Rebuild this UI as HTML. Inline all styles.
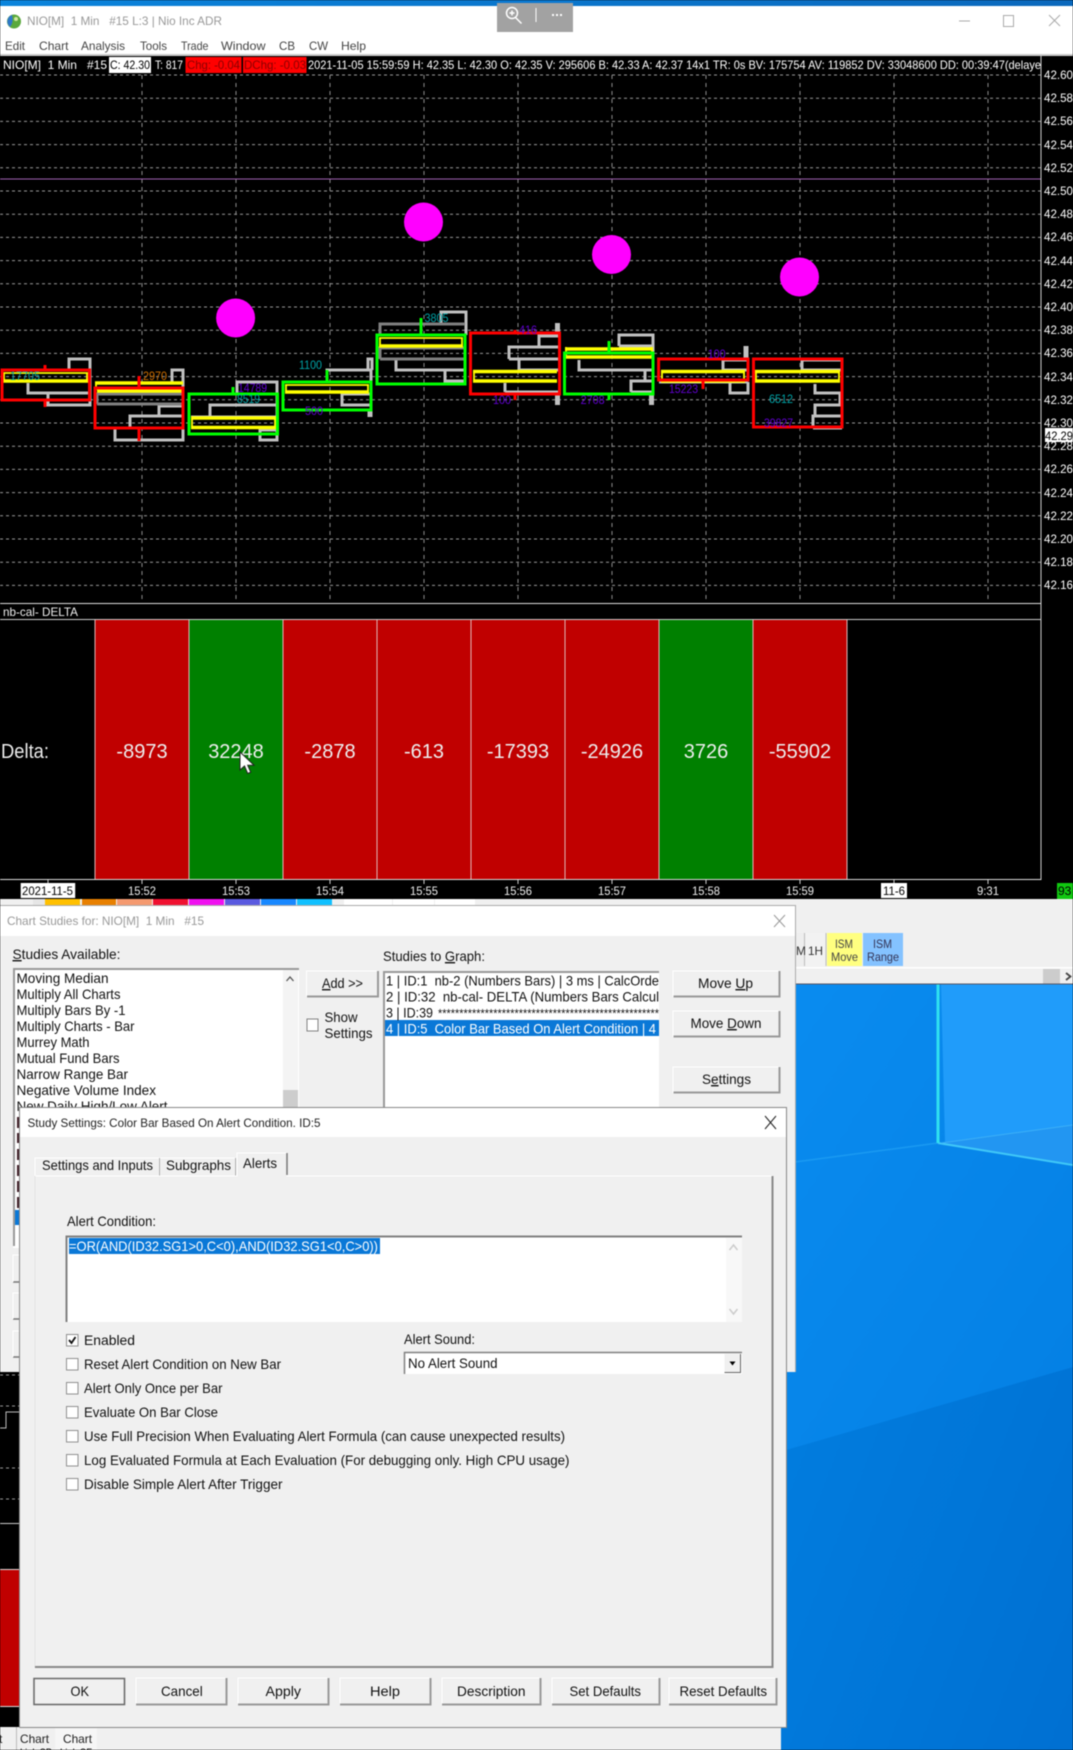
<!DOCTYPE html>
<html><head><meta charset="utf-8"><title>NIO[M] 1 Min</title>
<style>
html,body{margin:0;padding:0;background:#000;width:1073px;height:1750px;overflow:hidden}
svg{display:block;position:absolute;left:0;top:0;filter:blur(.4px)}
text{font-family:"Liberation Sans",sans-serif;font-size:14px;fill:#111;white-space:pre}
.c text,text.c{font-size:12px}
.w text{fill:#fff;font-size:12px}
.p text{fill:#fff;font-size:12px}
.tm text{fill:#eee;font-size:12px;text-anchor:middle}
.d text{fill:#eee;font-size:20px;text-anchor:middle}
.m text{fill:#444;font-size:12px}
.cy text,.pu text{font-size:12px}
.cy text{fill:#00a4a8}
.pu text{fill:#6000d0}
</style></head><body>
<svg xmlns="http://www.w3.org/2000/svg" width="1073" height="1750" viewBox="0 0 1073 1750">
<defs>
<linearGradient id="top" x1="0" x2="1" y1="0" y2="0"><stop offset="0" stop-color="#0a84dc"/><stop offset="1" stop-color="#0a68bc"/></linearGradient>
<linearGradient id="wl" x1="0" x2="1" y1="0" y2="1"><stop offset="0" stop-color="#0282e4"/><stop offset="1" stop-color="#0070d2"/></linearGradient>
<linearGradient id="wm" x1="0" x2="1" y1="0" y2="1"><stop offset="0" stop-color="#0a8cf0"/><stop offset="1" stop-color="#0480e4"/></linearGradient>
<clipPath id="hc"><rect x="0" y="55" width="1041" height="20"/></clipPath>
<clipPath id="pc"><rect x="1042" y="55" width="31" height="550"/></clipPath>
</defs>

<!-- window chrome -->
<rect x="0" y="0" width="1073" height="56" fill="#fff"/>
<rect x="0" y="0" width="1073" height="6" fill="url(#top)"/>
<circle cx="14" cy="21.500" r="7" fill="#5aa83c"/>
<path d="M14 14.500a7 7 0 0 0-4 12.500q4-5 2-12z" fill="#2f78c8"/>
<circle cx="16" cy="19" r="2" fill="#cfe8a0"/>
<text class="c" x="27" y="25" style="fill:#999" textLength="195" lengthAdjust="spacingAndGlyphs">NIO[M]  1 Min   #15 L:3 | Nio Inc ADR</text>
<rect x="497" y="0" width="76" height="32" fill="#a2a2a2"/>
<rect x="497" y="0" width="76" height="3" fill="#0a78d0"/>
<circle cx="512" cy="13" r="5.500" fill="none" stroke="#fff" stroke-width="1.500"/>
<path d="M509.500 13h5M512 10.500v5M515.500 17.500l6 6" stroke="#fff" stroke-width="1.500" fill="none"/>
<path d="M536 8v14" stroke="#fff"/>
<path d="M552 15h2M556 15h2M560 15h2" stroke="#fff" stroke-width="2"/>
<path d="M959 21h11" stroke="#aaa"/>
<rect x="1003.500" y="15.500" width="10" height="11" fill="none" stroke="#aaa"/>
<path d="M1049 15l11 11M1060 15l-11 11" stroke="#aaa" fill="none"/>
<g class="m">
<text x="5" y="50" textLength="20" lengthAdjust="spacingAndGlyphs">Edit</text>
<text x="39" y="50" textLength="29.500" lengthAdjust="spacingAndGlyphs">Chart</text>
<text x="81" y="50" textLength="44" lengthAdjust="spacingAndGlyphs">Analysis</text>
<text x="140" y="50" textLength="27" lengthAdjust="spacingAndGlyphs">Tools</text>
<text x="181" y="50" textLength="27.500" lengthAdjust="spacingAndGlyphs">Trade</text>
<text x="221" y="50" textLength="44.500" lengthAdjust="spacingAndGlyphs">Window</text>
<text x="279" y="50" textLength="16" lengthAdjust="spacingAndGlyphs">CB</text>
<text x="309" y="50" textLength="19" lengthAdjust="spacingAndGlyphs">CW</text>
<text x="341" y="50" textLength="25" lengthAdjust="spacingAndGlyphs">Help</text>
</g>
<rect x="0" y="54" width="1073" height="2" fill="#ccc"/>

<!-- chart -->
<rect x="0" y="56" width="1073" height="843" fill="#000"/>
<g clip-path="url(#hc)" class="w">
<text x="3" y="69" textLength="104" lengthAdjust="spacingAndGlyphs">NIO[M]  1 Min   #15</text>
<rect x="109" y="57" width="42" height="16" fill="#fff"/>
<text x="110" y="69" textLength="40" lengthAdjust="spacingAndGlyphs" style="fill:#000">C: 42.30</text>
<text x="155" y="69" textLength="28" lengthAdjust="spacingAndGlyphs">T: 817</text>
<rect x="185.500" y="57" width="56" height="16" fill="#f00"/>
<text x="187" y="69" textLength="53" lengthAdjust="spacingAndGlyphs" style="fill:#8a0000">Chg: -0.04</text>
<rect x="243" y="57" width="63.500" height="16" fill="#f00"/>
<text x="244" y="69" textLength="62" lengthAdjust="spacingAndGlyphs" style="fill:#8a0000">DChg: -0.03</text>
<text x="308" y="69" textLength="733" lengthAdjust="spacingAndGlyphs">2021-11-05 15:59:59 H: 42.35 L: 42.30 O: 42.35 V: 295606 B: 42.33 A: 42.37 14x1 TR: 0s BV: 175754 AV: 119852 DV: 33048600 DD: 00:39:47(delaye</text>
</g>
<path d="M0 75H1041M0 98.200H1041M0 121.400H1041M0 144.600H1041M0 167.800H1041M0 191H1041M0 214.200H1041M0 237.400H1041M0 260.600H1041M0 283.800H1041M0 307H1041M0 330.200H1041M0 353.400H1041M0 376.600H1041M0 399.800H1041M0 423H1041M0 446.200H1041M0 469.400H1041M0 492.600H1041M0 515.800H1041M0 539H1041M0 562.200H1041M0 585.400H1041" stroke="#999" stroke-dasharray="3 3" fill="none"/>
<path d="M142 75V603M236 75V603M330 75V603M424 75V603M518 75V603M612 75V603M706 75V603M800 75V603M894 75V603M988 75V603" stroke="#8c8c8c" stroke-dasharray="4 4" fill="none"/>
<path d="M0 179H1041" stroke="#a060b0" fill="none"/>
<path d="M1041 56V880" stroke="#ccc" fill="none"/>
<g class="p" clip-path="url(#pc)">
<text x="1044" y="79" textLength="29" lengthAdjust="spacingAndGlyphs">42.60</text>
<text x="1044" y="102" textLength="29" lengthAdjust="spacingAndGlyphs">42.58</text>
<text x="1044" y="125" textLength="29" lengthAdjust="spacingAndGlyphs">42.56</text>
<text x="1044" y="149" textLength="29" lengthAdjust="spacingAndGlyphs">42.54</text>
<text x="1044" y="172" textLength="29" lengthAdjust="spacingAndGlyphs">42.52</text>
<text x="1044" y="195" textLength="29" lengthAdjust="spacingAndGlyphs">42.50</text>
<text x="1044" y="218" textLength="29" lengthAdjust="spacingAndGlyphs">42.48</text>
<text x="1044" y="241" textLength="29" lengthAdjust="spacingAndGlyphs">42.46</text>
<text x="1044" y="265" textLength="29" lengthAdjust="spacingAndGlyphs">42.44</text>
<text x="1044" y="288" textLength="29" lengthAdjust="spacingAndGlyphs">42.42</text>
<text x="1044" y="311" textLength="29" lengthAdjust="spacingAndGlyphs">42.40</text>
<text x="1044" y="334" textLength="29" lengthAdjust="spacingAndGlyphs">42.38</text>
<text x="1044" y="357" textLength="29" lengthAdjust="spacingAndGlyphs">42.36</text>
<text x="1044" y="381" textLength="29" lengthAdjust="spacingAndGlyphs">42.34</text>
<text x="1044" y="404" textLength="29" lengthAdjust="spacingAndGlyphs">42.32</text>
<text x="1044" y="427" textLength="29" lengthAdjust="spacingAndGlyphs">42.30</text>
<text x="1044" y="450" textLength="29" lengthAdjust="spacingAndGlyphs">42.28</text>
<rect x="1045" y="428" width="28" height="14" fill="#fff"/>
<text x="1045" y="440" textLength="28" lengthAdjust="spacingAndGlyphs" style="fill:#000">42.29</text>
<text x="1044" y="473" textLength="29" lengthAdjust="spacingAndGlyphs">42.26</text>
<text x="1044" y="497" textLength="29" lengthAdjust="spacingAndGlyphs">42.24</text>
<text x="1044" y="520" textLength="29" lengthAdjust="spacingAndGlyphs">42.22</text>
<text x="1044" y="543" textLength="29" lengthAdjust="spacingAndGlyphs">42.20</text>
<text x="1044" y="566" textLength="29" lengthAdjust="spacingAndGlyphs">42.18</text>
<text x="1044" y="589" textLength="29" lengthAdjust="spacingAndGlyphs">42.16</text>
</g>

<!-- circles -->
<circle cx="423.500" cy="222" r="19.500" fill="#f0f"/>
<circle cx="611.500" cy="254.500" r="19.500" fill="#f0f"/>
<circle cx="799.500" cy="277" r="19.500" fill="#f0f"/>
<circle cx="235.600" cy="318" r="19.500" fill="#f0f"/>

<!-- gray bars -->
<g fill="none" stroke="#c0c0c0" stroke-width="3">
<path d="M69 370V359H90V405H48V393H28V383"/>
<path d="M28 393H90"/>
<path d="M172 382V370H183V382M183 382V440H115V427M130 427V416H183M159 416V406H183"/>
<path d="M237 393V382H277V440H260V430H277M210 417V405H277M191 417H277"/>
<path d="M327 382V370H371V405H342V394H371M368 370V359H372V370"/>
<path d="M441 324V312H466V335M396 360V370H465M445 370V381H465"/>
<path d="M539 346V336H559M509 359V347H559M509 359H559M519 370V360M519 370H559M505 392V383M505 392H559"/>
<path d="M619 346V335H653V394M619 346H653M579 360V370H653M645 370V381M631 392V381H653M631 392H653"/>
<path d="M723 370V360H748M723 370H748M730 382V393H748V382M659 382H748"/>
<path d="M802 370V360H842M802 370H842M815 384V393H840V405H815V416M813 428V416H842M813 428H842"/>
</g>
<g fill="none" stroke="#c0c0c0" stroke-width="5">
<path d="M370 410V417M557.500 323V333M557.500 394V405M651.500 394V405M746 346V359"/>
</g>
<g fill="none" stroke="#808080" stroke-width="3">
<path d="M97 404V394H183M97 404H183M380 335V324H465M380 359V348H465M380 359H465"/>
</g>

<!-- yellow -->
<g fill="none" stroke="#ff0" stroke-width="3.500">
<path d="M3 381H88M95 383H183M97 391H183M191 418H276M191 427.500H276M285 392H369M379 346H463M473 371.500H557M473 381H557M565 349H653M565 357H653M661 371.500H745M661 381H745M755 371.500H840M755 381H840"/>
</g>
<g fill="none" stroke="#ff0" stroke-width="1.800">
<path d="M3 373H88M4 373V381M87 373V381M96 383V390M192 418V428M275 418V428M285 385H369M286 385V392M368 385V392M379 338H463M380 338V346M462 338V346M474 371.500V381M566 347V357M652 347V357M662 371.500V381M744 371.500V381M756 371.500V381M839 371.500V381"/>
</g>

<!-- bodies -->
<g fill="none" stroke="#f00" stroke-width="3">
<rect x="2" y="370" width="87.500" height="30"/>
<path d="M45 365V370M45 400V407"/>
<rect x="95" y="388" width="88" height="40"/>
<path d="M139 376V388M139 428V441"/>
<rect x="470.500" y="333" width="89" height="61"/>
<path d="M515 330V333M515 394V400"/>
<rect x="658.600" y="359" width="89.400" height="21"/>
<path d="M703 380V389"/>
<rect x="753.500" y="359" width="88.500" height="68"/>
</g>
<g fill="none" stroke="#0f0" stroke-width="3">
<rect x="189" y="394" width="88.500" height="40"/>
<path d="M233 387V394"/>
<rect x="283" y="382" width="88" height="28"/>
<path d="M327 370V382"/>
<rect x="377" y="335" width="88" height="49"/>
<path d="M421 318V335"/>
<rect x="564.500" y="353" width="88.500" height="41"/>
<path d="M609 341V353M609 394V400"/>
</g>

<!-- value labels -->
<g class="cy">
<text x="10" y="380" textLength="30" lengthAdjust="spacingAndGlyphs">17705</text>
<text x="237" y="403" textLength="23" lengthAdjust="spacingAndGlyphs">8519</text>
<text x="299" y="369" textLength="23" lengthAdjust="spacingAndGlyphs">1100</text>
<text x="424.500" y="322" textLength="24" lengthAdjust="spacingAndGlyphs">3805</text>
<text x="769" y="403" textLength="24" lengthAdjust="spacingAndGlyphs">6512</text>
</g>
<text class="c" x="143" y="380" textLength="24" lengthAdjust="spacingAndGlyphs" style="fill:#d07000">2970</text>
<g class="pu">
<text x="238" y="392" textLength="29" lengthAdjust="spacingAndGlyphs">14789</text>
<text x="305" y="415" textLength="18" lengthAdjust="spacingAndGlyphs">500</text>
<text x="519" y="334" textLength="18" lengthAdjust="spacingAndGlyphs">416</text>
<text x="493" y="404" textLength="18" lengthAdjust="spacingAndGlyphs">100</text>
<text x="580.600" y="404" textLength="24" lengthAdjust="spacingAndGlyphs">2708</text>
<text x="707.700" y="358" textLength="18" lengthAdjust="spacingAndGlyphs">100</text>
<text x="669" y="393" textLength="29" lengthAdjust="spacingAndGlyphs">15223</text>
<text x="764" y="427" textLength="29" lengthAdjust="spacingAndGlyphs">39827</text>
</g>

<!-- delta panel -->
<rect x="0" y="603" width="1041" height="1" fill="#ddd"/>
<text x="3" y="616" textLength="75" lengthAdjust="spacingAndGlyphs" style="font-size:12px;fill:#eee">nb-cal- DELTA</text>
<rect x="0" y="619" width="1041" height="1" fill="#ccc"/>
<rect x="95" y="620" width="94" height="259" fill="#c00000"/>
<rect x="189" y="620" width="94" height="259" fill="#008000"/>
<rect x="283" y="620" width="94" height="259" fill="#c00000"/>
<rect x="377" y="620" width="94" height="259" fill="#c00000"/>
<rect x="471" y="620" width="94" height="259" fill="#c00000"/>
<rect x="565" y="620" width="94" height="259" fill="#c00000"/>
<rect x="659" y="620" width="94" height="259" fill="#008000"/>
<rect x="753" y="620" width="94" height="259" fill="#c00000"/>
<path d="M95 620V879M189 620V879M283 620V879M377 620V879M471 620V879M565 620V879M659 620V879M753 620V879M847 620V879" stroke="#ddb8b8" fill="none"/>
<text x="1" y="758" style="font-size:20px;fill:#eee" textLength="48" lengthAdjust="spacingAndGlyphs">Delta:</text>
<g class="d">
<text x="142" y="758">-8973</text>
<text x="236" y="758">32248</text>
<text x="330" y="758">-2878</text>
<text x="424" y="758">-613</text>
<text x="518" y="758">-17393</text>
<text x="612" y="758">-24926</text>
<text x="706" y="758">3726</text>
<text x="800" y="758">-55902</text>
</g>
<path d="M240 752V770l4.500-4 3.200 7.500 3-1.300-3-7h6.300Z" fill="#fff" stroke="#222" stroke-width="1"/>

<!-- time axis -->
<rect x="0" y="879" width="1041" height="1" fill="#ddd"/>
<path d="M48 880v4M142 880v4M236 880v4M330 880v4M424 880v4M518 880v4M612 880v4M706 880v4M800 880v4M894 880v4M988 880v4" stroke="#ccc" fill="none"/>
<rect x="20.700" y="883" width="54.500" height="15" fill="#fff"/>
<text x="22" y="895" textLength="51" lengthAdjust="spacingAndGlyphs" style="font-size:12px;fill:#000">2021-11-5</text>
<g class="tm">
<text x="142" y="895" textLength="28" lengthAdjust="spacingAndGlyphs">15:52</text>
<text x="236" y="895" textLength="28" lengthAdjust="spacingAndGlyphs">15:53</text>
<text x="330" y="895" textLength="28" lengthAdjust="spacingAndGlyphs">15:54</text>
<text x="424" y="895" textLength="28" lengthAdjust="spacingAndGlyphs">15:55</text>
<text x="518" y="895" textLength="28" lengthAdjust="spacingAndGlyphs">15:56</text>
<text x="612" y="895" textLength="28" lengthAdjust="spacingAndGlyphs">15:57</text>
<text x="706" y="895" textLength="28" lengthAdjust="spacingAndGlyphs">15:58</text>
<text x="800" y="895" textLength="28" lengthAdjust="spacingAndGlyphs">15:59</text>
<text x="988" y="895" textLength="22" lengthAdjust="spacingAndGlyphs">9:31</text>
</g>
<rect x="881" y="883" width="26" height="15" fill="#fff"/>
<text x="883" y="895" textLength="22" lengthAdjust="spacingAndGlyphs" style="font-size:12px;fill:#000">11-6</text>
<rect x="1057" y="883" width="16" height="16" fill="#10c810"/>
<text x="1058" y="895" style="font-size:12px;fill:#000">93</text>

<!-- toolbar behind -->
<rect x="0" y="899" width="1073" height="85" fill="#f0f0f0"/>
<rect x="33" y="899" width="12" height="7" fill="#e6e6e6"/>
<rect x="45" y="899" width="35" height="7" fill="#ffc000"/>
<rect x="82" y="899" width="34" height="7" fill="#e88000"/>
<rect x="117" y="899" width="35" height="7" fill="#f59a70"/>
<rect x="153" y="899" width="35" height="7" fill="#f01030"/>
<rect x="189" y="899" width="35" height="7" fill="#f010f0"/>
<rect x="225" y="899" width="35" height="7" fill="#5a5ae0"/>
<rect x="261" y="899" width="35" height="7" fill="#1888ff"/>
<rect x="297" y="899" width="35" height="7" fill="#10c0ff"/>
<rect x="344" y="899" width="48" height="6" fill="#fff"/>
<rect x="393" y="899" width="41" height="6" fill="#fff"/>
<rect x="435" y="899" width="40" height="6" fill="#fff"/>

<!-- wallpaper -->
<rect x="781" y="984" width="292" height="766" fill="url(#wl)"/>
<polygon points="781,984 1073,984 1073,1367 786,1450 781,1452" fill="url(#wm)"/>
<polygon points="941,984 1073,984 1073,1125 945,1142" fill="#209cfa"/>
<polygon points="941,1143 1073,1125 1073,1164" fill="#2296f2"/>
<path d="M938 1143L1073 1165" stroke="#40c8f8" stroke-width="2" fill="none"/>
<path d="M938 1143L795 1162" stroke="#1a9af2" stroke-width="1.500" fill="none"/>
<path d="M941 1143L1073 1125" stroke="#3cb0f8" stroke-width="1" fill="none"/>
<path d="M938 984V1143" stroke="#30e0f0" stroke-width="3" fill="none"/>

<!-- toolbar right -->
<rect x="795" y="933" width="9" height="33" fill="#eee"/>
<rect x="805" y="933" width="21" height="33" fill="#f2f2f2"/>
<path d="M804.500 933v33M826 933v33" stroke="#bbb" fill="none"/>
<rect x="827" y="933" width="35" height="33" fill="#ffff80"/>
<rect x="863" y="933" width="40" height="33" fill="#84c2ff"/>
<text x="796" y="955" style="font-size:12px;fill:#333">M</text>
<text x="808" y="955" textLength="15" lengthAdjust="spacingAndGlyphs" style="font-size:12px;fill:#333">1H</text>
<text x="835" y="948" textLength="18" lengthAdjust="spacingAndGlyphs" style="font-size:12px;fill:#444">ISM</text>
<text x="831" y="961" textLength="27" lengthAdjust="spacingAndGlyphs" style="font-size:12px;fill:#444">Move</text>
<text x="873" y="948" textLength="19" lengthAdjust="spacingAndGlyphs" style="font-size:12px;fill:#335">ISM</text>
<text x="867" y="961" textLength="32" lengthAdjust="spacingAndGlyphs" style="font-size:12px;fill:#335">Range</text>
<rect x="795" y="967" width="278" height="1.500" fill="#fff"/>
<rect x="1043" y="969" width="17" height="15" fill="#ccc"/>
<path d="M1066 973l4.500 3.500-4.500 3.500" fill="none" stroke="#444" stroke-width="1.800"/>
<rect x="795" y="983.500" width="278" height="1" fill="#556"/>

<!-- lower left under windows -->
<rect x="0" y="1372" width="20" height="355" fill="#000"/>
<path d="M0 1375H20M0 1406H20M0 1468H20M0 1499H20" stroke="#999" stroke-dasharray="3 3" fill="none"/>
<path d="M0 1428H6V1412H20" stroke="#bbb" fill="none"/>
<rect x="0" y="1523" width="20" height="1" fill="#ccc"/>
<rect x="0" y="1569" width="20" height="1" fill="#ddd"/>
<rect x="0" y="1570" width="20" height="136" fill="#c00000"/>
<rect x="0" y="1706" width="20" height="1" fill="#ddd"/>
<rect x="0" y="1727" width="781" height="23" fill="#f0f0f0"/>
<rect x="16" y="1727" width="1" height="23" fill="#bbb"/>
<rect x="55" y="1727" width="42" height="23" fill="#f6f6f6"/>
<text x="-1" y="1743" style="font-size:12px;fill:#222">t</text>
<text x="20" y="1743" textLength="29" lengthAdjust="spacingAndGlyphs" style="font-size:12px;fill:#222">Chart</text>
<text x="63" y="1743" textLength="29" lengthAdjust="spacingAndGlyphs" style="font-size:12px;fill:#222">Chart</text>
<text x="20" y="1757" textLength="32" lengthAdjust="spacingAndGlyphs" style="font-size:12px;fill:#222">Link SP</text>
<text x="60" y="1757" textLength="32" lengthAdjust="spacingAndGlyphs" style="font-size:12px;fill:#222">Link SF</text>

<!-- Chart Studies dialog -->
<rect x="0" y="905" width="795" height="467" fill="#f0f0f0"/>
<rect x="0" y="906" width="795" height="30" fill="#fff"/>
<path d="M0 905.500H795.500V1372" stroke="#aaa" fill="none"/>
<text x="7" y="925" textLength="197" lengthAdjust="spacingAndGlyphs" style="font-size:12px;fill:#999">Chart Studies for: NIO[M]  1 Min   #15</text>
<path d="M774 915l11 12M785 915l-11 12" stroke="#999" fill="none"/>
<text x="12.500" y="959" textLength="108" lengthAdjust="spacingAndGlyphs"><tspan style="text-decoration:underline">S</tspan>tudies Available:</text>
<rect x="13" y="968" width="286" height="280" fill="#fff"/>
<path d="M14 1246V969H299" stroke="#999" stroke-width="2" fill="none"/>
<rect x="283" y="970" width="15" height="137" fill="#f4f4f4"/>
<rect x="283" y="1090" width="15" height="20" fill="#cdcdcd"/>
<path d="M286.500 981l3.500-4 3.500 4" fill="none" stroke="#555" stroke-width="1.300"/>
<g>
<text x="16.500" y="983" textLength="92" lengthAdjust="spacingAndGlyphs">Moving Median</text>
<text x="16.500" y="999" textLength="104" lengthAdjust="spacingAndGlyphs">Multiply All Charts</text>
<text x="16.500" y="1015" textLength="109" lengthAdjust="spacingAndGlyphs">Multiply Bars By -1</text>
<text x="16.500" y="1031" textLength="118" lengthAdjust="spacingAndGlyphs">Multiply Charts - Bar</text>
<text x="16.500" y="1047" textLength="73" lengthAdjust="spacingAndGlyphs">Murrey Math</text>
<text x="16.500" y="1063" textLength="103" lengthAdjust="spacingAndGlyphs">Mutual Fund Bars</text>
<text x="16.500" y="1079" textLength="111.500" lengthAdjust="spacingAndGlyphs">Narrow Range Bar</text>
<text x="16.500" y="1095" textLength="139.500" lengthAdjust="spacingAndGlyphs">Negative Volume Index</text>
<text x="16.500" y="1111" textLength="151" lengthAdjust="spacingAndGlyphs">New Daily High/Low Alert</text>
</g>
<path d="M17 1117h2v11h-2zM17 1133h2v10h-2zM17 1149h2v11h-2zM17 1165h2v11h-2zM17 1181h2v11h-2zM17 1197h2v11h-2z" fill="#402028"/>
<rect x="15" y="1210" width="4" height="15" fill="#0a78d7"/>
<rect x="13" y="1248" width="7" height="124" fill="#f0f0f0"/>
<path d="M13 1282h6M13 1319h6M13 1357h6" stroke="#777" stroke-width="1.500" fill="none"/>
<path d="M13 1282V1255H19M13 1319V1293H19M13 1357V1331H19" stroke="#fff" fill="none"/>

<!-- Add / show -->
<rect x="306.500" y="971" width="72" height="26" fill="#f0f0f0"/>
<path d="M306.500 997V971H378.500" stroke="#fff" fill="none"/>
<path d="M307 996.500H378V971" stroke="#999" stroke-width="2" fill="none"/>
<text x="322" y="988" textLength="41" lengthAdjust="spacingAndGlyphs"><tspan style="text-decoration:underline">A</tspan>dd &gt;&gt;</text>
<rect x="307" y="1019" width="11" height="12" fill="#fff" stroke="#808080"/>
<text x="324.500" y="1022" textLength="33" lengthAdjust="spacingAndGlyphs">Show</text>
<text x="324.500" y="1038" textLength="48" lengthAdjust="spacingAndGlyphs">Settings</text>
<text x="383" y="961" textLength="102" lengthAdjust="spacingAndGlyphs">Studies to <tspan style="text-decoration:underline">G</tspan>raph:</text>
<rect x="383" y="971" width="276" height="138" fill="#fff"/>
<path d="M384 1108V972H659" stroke="#999" stroke-width="2" fill="none"/>
<rect x="385" y="1020" width="274" height="16" fill="#0a78d7"/>
<text x="386" y="985.500" textLength="273" lengthAdjust="spacingAndGlyphs">1 | ID:1  nb-2 (Numbers Bars) | 3 ms | CalcOrde</text>
<text x="386" y="1001.500" textLength="273" lengthAdjust="spacingAndGlyphs">2 | ID:32  nb-cal- DELTA (Numbers Bars Calcul</text>
<text x="386" y="1017.500" textLength="47" lengthAdjust="spacingAndGlyphs">3 | ID:39</text>
<text x="438" y="1017.500" textLength="221" lengthAdjust="spacingAndGlyphs" style="font-size:12px">****************************************************</text>
<text x="386" y="1033.500" textLength="270" lengthAdjust="spacingAndGlyphs" style="fill:#fff">4 | ID:5  Color Bar Based On Alert Condition | 4</text>
<!-- right buttons -->
<path d="M673 997V971H780M673 1037V1011H780M673 1093V1067H780" stroke="#fff" fill="none"/>
<path d="M673.500 996.500H779.500V971M673.500 1036.500H779.500V1011M673.500 1092.500H779.500V1067" stroke="#999" stroke-width="2" fill="none"/>
<text x="698" y="988" textLength="55" lengthAdjust="spacingAndGlyphs">Move <tspan style="text-decoration:underline">U</tspan>p</text>
<text x="690.500" y="1028" textLength="71" lengthAdjust="spacingAndGlyphs">Move <tspan style="text-decoration:underline">D</tspan>own</text>
<text x="702" y="1084" textLength="49" lengthAdjust="spacingAndGlyphs">S<tspan style="text-decoration:underline">e</tspan>ttings</text>

<!-- Study Settings dialog -->
<rect x="19" y="1107" width="767" height="620" fill="#f0f0f0"/>
<rect x="19" y="1108" width="767" height="29" fill="#fff"/>
<path d="M19.500 1727.500V1107.500H786.500V1727.500H19.500" stroke="#888" fill="none"/>
<text x="27.500" y="1127" textLength="293" lengthAdjust="spacingAndGlyphs" style="font-size:12px;fill:#222">Study Settings: Color Bar Based On Alert Condition. ID:5</text>
<path d="M765 1116l11 13M776 1116l-11 13" stroke="#222" fill="none"/>
<!-- tabs -->
<path d="M35 1176V1158H159V1176M159 1158H235V1176" stroke="#fff" fill="none"/>
<path d="M159.500 1158V1176M235.500 1158V1176" stroke="#aaa" fill="none"/>
<path d="M35 1176H237V1153H287V1176H773" stroke="#fff" fill="none"/>
<path d="M35 1668V1176" stroke="#e2e2e2" fill="none"/>
<path d="M287 1153V1175" stroke="#777" stroke-width="1.500" fill="none"/>
<path d="M772.500 1176V1667H35" stroke="#888" stroke-width="2" fill="none"/>
<text x="42" y="1170" textLength="111" lengthAdjust="spacingAndGlyphs">Settings and Inputs</text>
<text x="166" y="1170" textLength="65" lengthAdjust="spacingAndGlyphs">Subgraphs</text>
<text x="243" y="1168" textLength="34" lengthAdjust="spacingAndGlyphs">Alerts</text>
<text x="67" y="1226" textLength="89" lengthAdjust="spacingAndGlyphs">Alert Condition:</text>
<rect x="66" y="1236" width="676" height="86" fill="#fff"/>
<path d="M66.500 1322V1236.500H742" stroke="#808080" stroke-width="2" fill="none"/>
<rect x="726" y="1238" width="16" height="84" fill="#f8f8f8"/>
<path d="M729.500 1250l4-5 4 5M729.500 1309l4 5 4-5" fill="none" stroke="#ccc" stroke-width="1.500"/>
<rect x="69" y="1238" width="311" height="16" fill="#0a78d7"/>
<text x="69" y="1251" textLength="309" lengthAdjust="spacingAndGlyphs" style="fill:#fff">=OR(AND(ID32.SG1&gt;0,C&lt;0),AND(ID32.SG1&lt;0,C&gt;0))</text>
<!-- checks -->
<g fill="#fff" stroke="#909090">
<rect x="66.500" y="1334.500" width="11.500" height="11.500"/>
<rect x="66.500" y="1358.500" width="11.500" height="11.500"/>
<rect x="66.500" y="1382.500" width="11.500" height="11.500"/>
<rect x="66.500" y="1406.500" width="11.500" height="11.500"/>
<rect x="66.500" y="1430.500" width="11.500" height="11.500"/>
<rect x="66.500" y="1454.500" width="11.500" height="11.500"/>
<rect x="66.500" y="1478.500" width="11.500" height="11.500"/>
</g>
<path d="M69 1340l2.500 3 4-6" fill="none" stroke="#111" stroke-width="1.800"/>
<text x="84" y="1345" textLength="51" lengthAdjust="spacingAndGlyphs">Enabled</text>
<text x="84" y="1369" textLength="197" lengthAdjust="spacingAndGlyphs">Reset Alert Condition on New Bar</text>
<text x="84" y="1393" textLength="138.500" lengthAdjust="spacingAndGlyphs">Alert Only Once per Bar</text>
<text x="84" y="1417" textLength="134" lengthAdjust="spacingAndGlyphs">Evaluate On Bar Close</text>
<text x="84" y="1441" textLength="481" lengthAdjust="spacingAndGlyphs">Use Full Precision When Evaluating Alert Formula (can cause unexpected results)</text>
<text x="84" y="1465" textLength="485.500" lengthAdjust="spacingAndGlyphs">Log Evaluated Formula at Each Evaluation (For debugging only. High CPU usage)</text>
<text x="84" y="1489" textLength="198.500" lengthAdjust="spacingAndGlyphs">Disable Simple Alert After Trigger</text>
<text x="404" y="1344" textLength="71" lengthAdjust="spacingAndGlyphs">Alert Sound:</text>
<rect x="404" y="1352" width="338" height="22" fill="#fff"/>
<path d="M404.500 1374V1352.500H742" stroke="#808080" stroke-width="1.500" fill="none"/>
<rect x="724.500" y="1354" width="16" height="19" fill="#f0f0f0"/>
<path d="M740.500 1354V1372.500H724.500" stroke="#666" fill="none"/>
<path d="M729.500 1361.500h6l-3 4z" fill="#000"/>
<text x="408" y="1368" textLength="89.500" lengthAdjust="spacingAndGlyphs">No Alert Sound</text>
<!-- bottom buttons -->
<path d="M34 1705V1678H125M136 1705V1678H227M238 1705V1678H329M340 1705V1678H431M442 1705V1678H541M552 1705V1678H660M669 1705V1678H777" stroke="#fff" fill="none"/>
<path d="M136 1704.500H226.500V1678M238 1704.500H328.500V1678M340 1704.500H430.500V1678M442 1704.500H540.500V1678M552 1704.500H659.500V1678M669 1704.500H776.500V1678" stroke="#999" stroke-width="2" fill="none"/>
<path d="M34 1678.500H124.500V1704.500H34Z" stroke="#666" stroke-width="1.500" fill="none"/>
<text x="70.500" y="1696" textLength="18.500" lengthAdjust="spacingAndGlyphs">OK</text>
<text x="161" y="1696" textLength="41.700" lengthAdjust="spacingAndGlyphs">Cancel</text>
<text x="265.500" y="1696" textLength="35.500" lengthAdjust="spacingAndGlyphs">Apply</text>
<text x="370" y="1696" textLength="30" lengthAdjust="spacingAndGlyphs">Help</text>
<text x="457" y="1696" textLength="68.500" lengthAdjust="spacingAndGlyphs">Description</text>
<text x="569.500" y="1696" textLength="71.500" lengthAdjust="spacingAndGlyphs">Set Defaults</text>
<text x="679.500" y="1696" textLength="87.500" lengthAdjust="spacingAndGlyphs">Reset Defaults</text>
</svg>
</body></html>
